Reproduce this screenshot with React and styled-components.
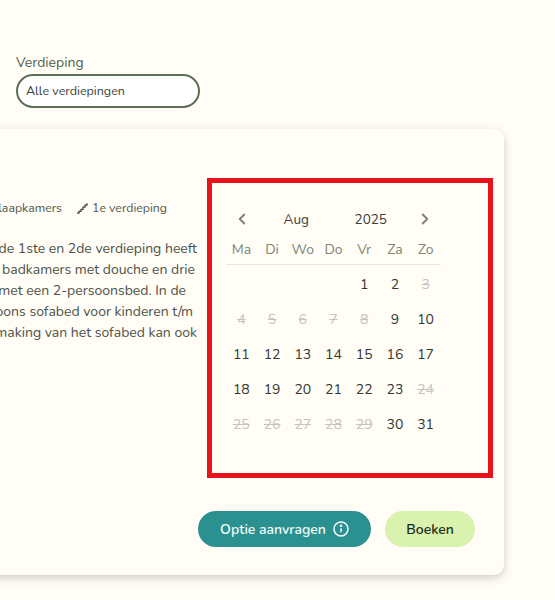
import React from "react";
import styled, { createGlobalStyle } from "styled-components";
import { ChevronLeft, ChevronRight } from "lucide-react";

const GlobalStyle = createGlobalStyle`
  html, body {
    margin: 0;
    height: 100%;
    overflow: hidden;
    background: #fffdf6;
    font-family: "Nunito", "Lato", "Noto Sans", sans-serif;
    color: #444b40;
  }
`;

const Page = styled.div`
  width: 555px;
  height: 600px;
  overflow: hidden;
  padding-top: 54px;
  box-sizing: border-box;
`;

const Filter = styled.div`
  margin-left: 16px;
  width: 184px;
`;

const FilterLabel = styled.div`
  font-size: 14px;
  line-height: 18px;
  color: #4f5f49;
  margin-bottom: 2px;
`;

const Select = styled.div`
  height: 34px;
  box-sizing: border-box;
  border: 2px solid #5c6e56;
  border-radius: 17px;
  background: #fff;
  padding-left: 8px;
  font-size: 12.5px;
  line-height: 30px;
  color: #37423a;
`;

const Card = styled.div`
  width: 524px;
  height: 446px;
  margin: 21px 0 0 -20px;
  box-sizing: border-box;
  padding: 49px 11px 28px 0;
  background: #fffdf6;
  border-radius: 0 10px 10px 0;
  box-shadow: 0 3px 8px rgba(90, 85, 70, 0.28);
  display: flex;
  flex-direction: column;
  justify-content: space-between;
`;

const Columns = styled.div`
  display: flex;
  justify-content: space-between;
`;

const Info = styled.div`
  width: 217px;
  padding-top: 22px;
`;

const Meta = styled.div`
  display: flex;
  justify-content: flex-end;
  align-items: center;
  gap: 14px;
  margin-right: 30px;
  font-size: 12.3px;
  line-height: 16px;
  color: #4f5a4c;
  white-space: nowrap;
`;

const MetaItem = styled.span`
  display: flex;
  align-items: center;
  gap: 4px;
`;

const Description = styled.div`
  margin-top: 22px;
  display: flex;
  flex-direction: column;
  align-items: flex-end;
  font-size: 14px;
  line-height: 21px;
  color: #4d5349;
  white-space: nowrap;
`;

const Line = styled.div`
  margin-right: ${(props) => props.$end}px;
`;

const Calendar = styled.div`
  width: 286px;
  height: 300px;
  box-sizing: border-box;
  border: 5px solid #e8141c;
  padding: 20px 47px 0 14px;
`;

const MonthBar = styled.div`
  display: grid;
  grid-template-columns: 34px 1fr 1fr 34px;
  align-items: center;
  height: 32px;
  margin: 0 -1px;
  font-size: 13.5px;
  color: #3a3f38;
  text-align: center;
`;

const NavButton = styled.span`
  display: flex;
  justify-content: center;
  color: #7e8379;
`;

const Weekdays = styled.div`
  display: grid;
  grid-template-columns: repeat(7, 1fr);
  height: 29px;
  border-bottom: 1px solid #e8e7e0;
  font-size: 14px;
  line-height: 29px;
  color: #7c8576;
  text-align: center;
`;

const Days = styled.div`
  display: grid;
  grid-template-columns: repeat(7, 1fr);
  grid-auto-rows: 35px;
  padding-top: 2px;
  align-items: center;
  text-align: center;
  font-size: 14px;
`;

const Day = styled.span`
  color: ${(props) => (props.$disabled ? "#c4c4c0" : "#33382f")};
  text-decoration: ${(props) => (props.$disabled ? "line-through" : "none")};
  grid-column-start: ${(props) => props.$start || "auto"};
`;

const Actions = styled.div`
  display: flex;
  justify-content: flex-end;
  gap: 14px;
  padding-right: 18px;
`;

const Button = styled.button`
  height: 36px;
  border: 0;
  border-radius: 18px;
  padding: 0;
  width: ${(props) => props.$width}px;
  display: flex;
  align-items: center;
  justify-content: center;
  gap: 7px;
  background: ${(props) => (props.$primary ? "#2b9190" : "#d9f2ad")};
  color: ${(props) => (props.$primary ? "#f3fbf8" : "#1f2a1c")};
  font-family: inherit;
  font-size: 14px;
  font-weight: 600;
`;

const weekdays = ["Ma", "Di", "Wo", "Do", "Vr", "Za", "Zo"];
const disabled = [3, 4, 5, 6, 7, 8, 24, 25, 26, 27, 28, 29];
const days = Array.from({ length: 31 }, (_, i) => i + 1);

const StairsIcon = () => (
  <svg width="12" height="12" viewBox="0 0 12 12" fill="none" stroke="#3f4a3c" strokeWidth="1.3">
    <path d="M1 11.2h2V9.4h2V7.4h2V5.2h2V3.2h2V1.2" />
  </svg>
);

const InfoIcon = () => (
  <svg width="16" height="16" viewBox="0 0 16 16" fill="none" stroke="#f3fbf8" strokeWidth="1.5">
    <circle cx="8" cy="8" r="7" />
    <path d="M8 7.2v4" />
    <circle cx="8" cy="4.8" r="0.5" fill="#f3fbf8" />
  </svg>
);

const App = () => {
  return (
    <Page>
      <GlobalStyle />
      <Filter>
        <FilterLabel>Verdieping</FilterLabel>
        <Select>Alle verdiepingen</Select>
      </Filter>
      <Card>
        <Columns>
          <Info>
            <Meta>
              <span>3 slaapkamers</span>
              <MetaItem>
                <StairsIcon />
                1e verdieping
              </MetaItem>
            </Meta>
            <Description>
              <Line $end={0}>op de 1ste en 2de verdieping heeft</Line>
              <Line $end={2}>twee badkamers met douche en drie</Line>
              <Line $end={11}>slaapkamers met een 2-persoonsbed. In de</Line>
              <Line $end={4}>1-persoons sofabed voor kinderen t/m</Line>
              <Line $end={0}>Het opmaking van het sofabed kan ook</Line>
            </Description>
          </Info>
          <Calendar>
            <MonthBar>
              <NavButton>
                <ChevronLeft size={18} strokeWidth={2.5} />
              </NavButton>
              <span>Aug</span>
              <span>2025</span>
              <NavButton>
                <ChevronRight size={18} strokeWidth={2.5} />
              </NavButton>
            </MonthBar>
            <Weekdays>
              {weekdays.map((name) => (
                <span key={name}>{name}</span>
              ))}
            </Weekdays>
            <Days>
              {days.map((day) => (
                <Day key={day} $disabled={disabled.includes(day)} $start={day === 1 ? 5 : undefined}>
                  {day}
                </Day>
              ))}
            </Days>
          </Calendar>
        </Columns>
        <Actions>
          <Button $primary $width={173}>
            Optie aanvragen
            <InfoIcon />
          </Button>
          <Button $width={90}>Boeken</Button>
        </Actions>
      </Card>
    </Page>
  );
};

export default App;
